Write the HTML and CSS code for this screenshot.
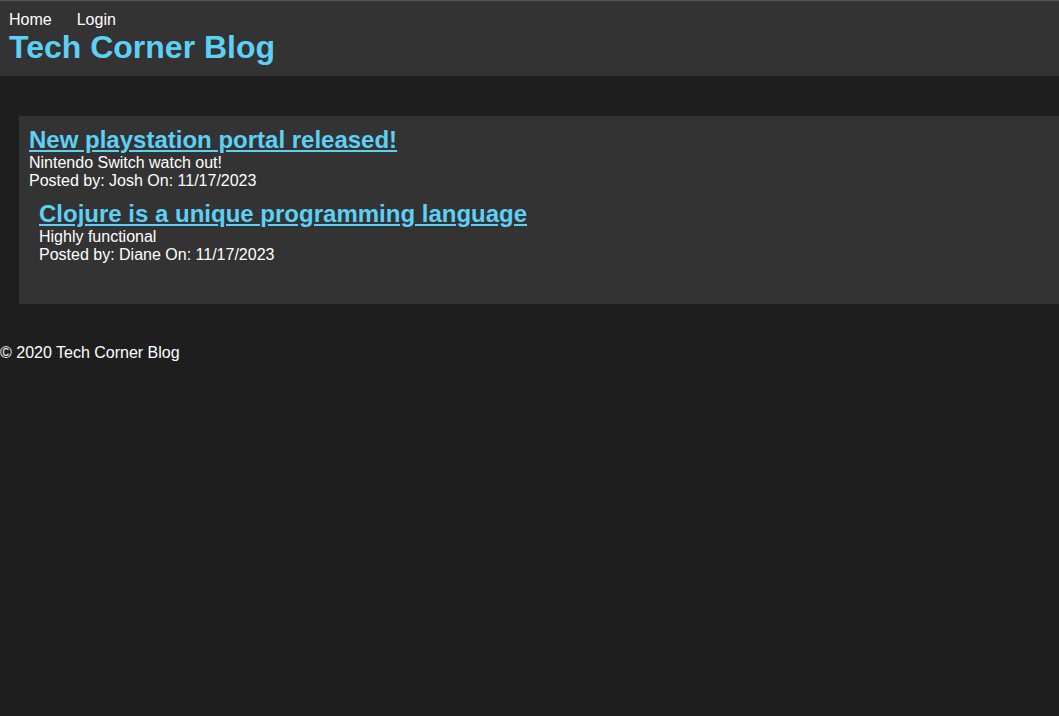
FILE: index.html
```html
<!DOCTYPE html>
<html lang="en">
<head>
<meta charset="utf-8">
<title>Tech Corner Blog</title>
<link rel="stylesheet" href="styles.css">
</head>
<body>
<header class="site-header">
  <nav class="nav">
    <a class="nav-link" href="#">Home</a>
    <a class="nav-link" href="#">Login</a>
  </nav>
  <h1 class="site-title">Tech Corner Blog</h1>
</header>
<main class="main">
  <section class="posts">
    <article class="post">
      <h2 class="post-title"><a href="#">New playstation portal released!</a></h2>
      <p class="post-body">Nintendo Switch watch out!</p>
      <p class="post-meta">Posted by: Josh On: 11/17/2023</p>
      <article class="post">
        <h2 class="post-title"><a href="#">Clojure is a unique programming language</a></h2>
        <p class="post-body">Highly functional</p>
        <p class="post-meta">Posted by: Diane On: 11/17/2023</p>
      </article>
    </article>
  </section>
</main>
<footer class="footer">© 2020 Tech Corner Blog</footer>
</body>
</html>
```
FILE: styles.css
```css
html, body {
  margin: 0;
  padding: 0;
  background: #1e1e1e;
  color: #ffffff;
  font-family: Arial, "Liberation Sans", sans-serif;
  font-size: 16px;
  overflow: hidden;
}
.site-header {
  background: #333333;
  border-top: 1px solid #555555;
  padding: 10px 9px 10px;
}
.nav {
  display: flex;
  gap: 25px;
  line-height: 18px;
}
.nav-link {
  color: #ffffff;
  text-decoration: none;
}
.site-title {
  margin: 0;
  font-size: 32px;
  line-height: 37px;
  color: #5ed0f5;
  font-weight: bold;
}
.main {
  padding: 40px 0 0 19px;
}
.posts {
  background: #333333;
  width: 100%;
  padding: 10px 0 20px 0;
}
.post {
  padding: 0 10px 10px;
}
.post .post {
  padding-top: 10px;
}
.post-title {
  margin: 0;
  font-size: 24px;
  line-height: 28px;
}
.post-title a {
  color: #5ed0f5;
  text-decoration: underline;
}
.post-body, .post-meta {
  margin: 0;
  line-height: 18px;
}
.footer {
  margin-top: 40px;
  line-height: 18px;
}
```
